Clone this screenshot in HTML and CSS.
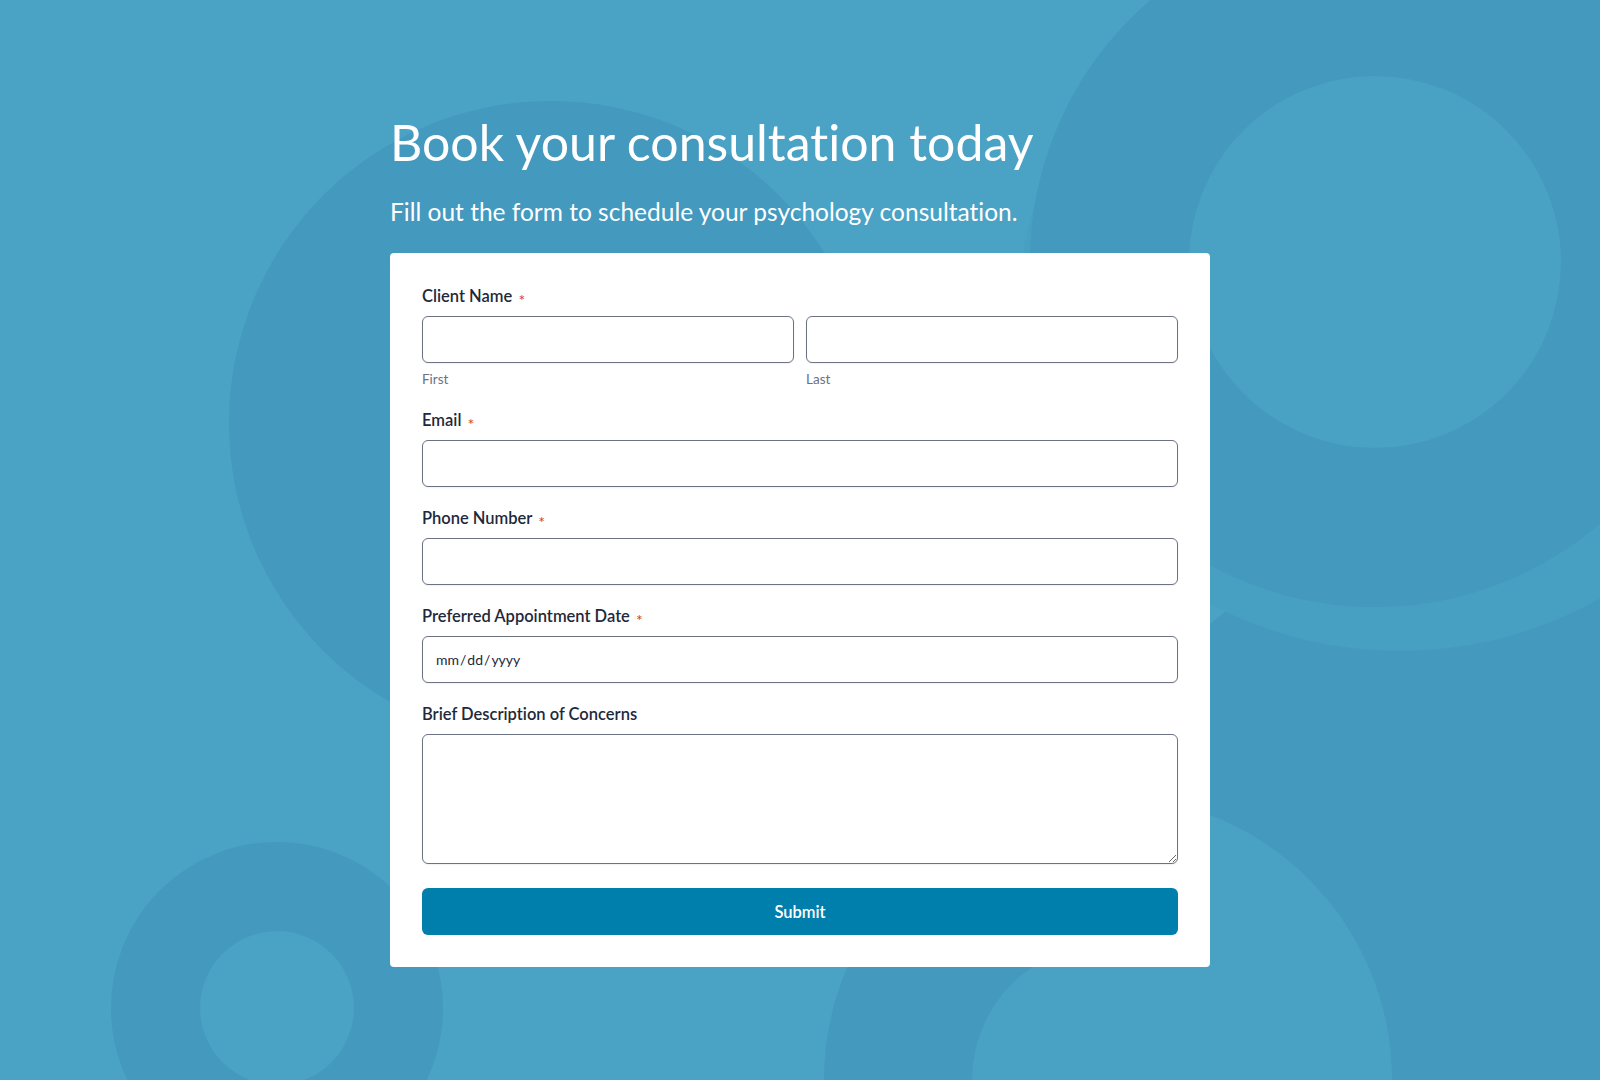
FILE: index.html
```html
<!DOCTYPE html>
<html lang="en">
<head>
<meta charset="utf-8">
<title>Book your consultation today</title>
<link rel="stylesheet" href="styles.css">
</head>
<body>
<div class="backdrop" aria-hidden="true">
  <span class="shape corner-dark"></span>
  <span class="shape halo-right"></span>
  <span class="shape disc-left"></span>
  <span class="shape ring-right"></span>
  <span class="shape ring-bottom-left"></span>
  <span class="shape ring-bottom-right"><span class="ring-hole"></span></span>
</div>
<main class="page">
  <h1 class="title">Book your consultation today</h1>
  <p class="subtitle">Fill out the form to schedule your psychology consultation.</p>
  <form class="card">
    <div class="field">
      <label class="label">Client Name <span class="req">*</span></label>
      <div class="name-row">
        <div class="name-col">
          <input class="input" type="text">
          <span class="sublabel">First</span>
        </div>
        <div class="name-col">
          <input class="input" type="text">
          <span class="sublabel">Last</span>
        </div>
      </div>
    </div>
    <div class="field">
      <label class="label">Email <span class="req">*</span></label>
      <input class="input" type="email">
    </div>
    <div class="field">
      <label class="label">Phone Number <span class="req">*</span></label>
      <input class="input" type="tel">
    </div>
    <div class="field">
      <label class="label">Preferred Appointment Date <span class="req">*</span></label>
      <input class="input date" type="date">
    </div>
    <div class="field">
      <label class="label">Brief Description of Concerns</label>
      <textarea class="input textarea"></textarea>
    </div>
    <button class="submit" type="button">Submit</button>
  </form>
</main>
</body>
</html>
```

FILE: styles.css
```css
* { box-sizing: border-box; }

html, body {
  margin: 0;
  padding: 0;
}

body {
  width: 1600px;
  height: 1080px;
  overflow: hidden;
  position: relative;
  background: #4aa2c5;
  font-family: "Lato", "Open Sans", sans-serif;
  font-variant-ligatures: none;
  color: #1e293b;
}

/* decorative background circles */
.backdrop {
  position: absolute;
  inset: 0;
  z-index: 0;
  overflow: hidden;
}

.shape {
  position: absolute;
  border-radius: 50%;
  display: block;
}

.corner-dark {
  left: 1000px;
  top: 480px;
  width: 1200px;
  height: 1200px;
  background: #4399be;
}

.halo-right {
  left: 1020px;
  top: -51px;
  width: 760px;
  height: 702px;
  background: #479fc2;
}

.disc-left {
  left: 229px;
  top: 101px;
  width: 644px;
  height: 644px;
  background: #4399be;
}

.ring-right {
  left: 1030px;
  top: -83px;
  width: 690px;
  height: 690px;
  border: 159px solid #4399be;
  background: #49a1c4;
}

.ring-bottom-left {
  left: 111px;
  top: 842px;
  width: 332px;
  height: 332px;
  border: 89px solid #4399be;
  background: #4aa2c5;
}

.ring-bottom-right {
  left: 824px;
  top: 796px;
  width: 568px;
  height: 568px;
  background: linear-gradient(to right, #4399be 50%, #49a1c4 50%);
}

.ring-hole {
  position: absolute;
  left: 148px;
  top: 148px;
  width: 272px;
  height: 272px;
  border-radius: 50%;
  background: #49a1c4;
}

/* content */
.page {
  position: relative;
  z-index: 1;
  width: 820px;
  margin: 0 auto;
  padding-top: 112px;
}

.title {
  margin: 0 0 25px;
  font-size: 50px;
  line-height: 1.2;
  font-weight: 400;
  color: #ffffff;
}

.subtitle {
  margin: 0 0 27px;
  font-size: 24.5px;
  line-height: 1.2;
  font-weight: 400;
  color: #ffffff;
}

.card {
  background: #ffffff;
  border-radius: 4px;
  padding: 33px 32px 32px;
  display: flex;
  flex-direction: column;
  gap: 21px;
}

.field {
  display: flex;
  flex-direction: column;
}

.label {
  height: 20px;
  font-size: 16.5px;
  line-height: 20px;
  font-weight: 600;
  color: #1e293b;
  margin-bottom: 10px;
}

.req {
  color: #dc3b24;
  font-size: 16px;
  font-weight: 400;
  line-height: 0;
  margin-left: 2px;
  vertical-align: -4px;
}

.name-row {
  display: grid;
  grid-template-columns: 1fr 1fr;
  column-gap: 12px;
}

.name-col {
  display: flex;
  flex-direction: column;
}

.sublabel {
  margin-top: 6px;
  font-size: 13.5px;
  line-height: 20px;
  color: #6b7280;
}

.input {
  width: 100%;
  height: 47px;
  border: 1px solid #6b7280;
  border-radius: 6px;
  background: #ffffff;
  padding: 0 12px;
  font-family: "Lato", "Open Sans", sans-serif;
  font-size: 14px;
  color: #1e293b;
  box-shadow: 0 1px 2px rgba(0, 0, 0, 0.06);
  outline: none;
}

.date::-webkit-calendar-picker-indicator {
  display: none;
}

.textarea {
  height: 130px;
  padding: 10px 12px;
  resize: vertical;
}

.submit {
  margin-top: 3px;
  height: 47px;
  border: 0;
  border-radius: 6px;
  background: #007fad;
  color: #ffffff;
  font-family: "Lato", "Open Sans", sans-serif;
  font-size: 16.5px;
  font-weight: 600;
  cursor: pointer;
}
```
